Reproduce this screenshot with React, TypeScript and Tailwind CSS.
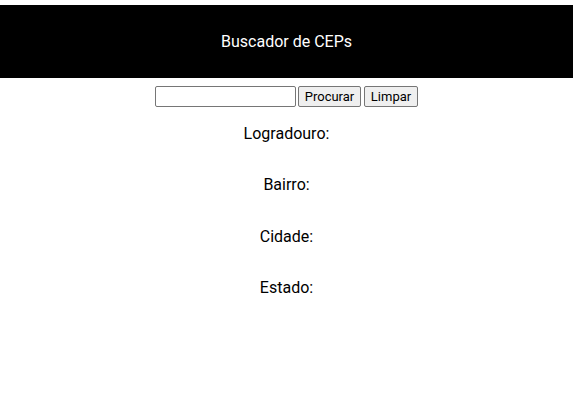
const labels = ["Logradouro:", "Bairro:", "Cidade:", "Estado:"];

export default function App() {
  return (
    <div className="min-h-[415px] bg-white font-['Roboto',sans-serif] text-black">
      <header className="mt-[5px] flex h-[73px] items-center justify-center bg-black text-base text-white">
        Buscador de CEPs
      </header>

      <div className="mt-[8px] flex justify-center">
        <input
          type="text"
          className="h-[21px] w-[141px] rounded-[2px] border border-[#767676] bg-white px-[2px] text-[13px] outline-none"
        />
        <button className="ml-[2px] h-[21px] w-[63px] rounded-[2px] border border-[#767676] bg-[#efefef] text-[13px] leading-none">
          Procurar
        </button>
        <button className="ml-[3px] h-[21px] w-[54px] rounded-[2px] border border-[#767676] bg-[#efefef] text-[13px] leading-none">
          Limpar
        </button>
      </div>

      <div className="mt-[17px] flex flex-col items-center gap-[32.3px]">
        {labels.map((l) => (
          <p key={l} className="text-base leading-[19px]">
            {l}
          </p>
        ))}
      </div>
    </div>
  );
}
